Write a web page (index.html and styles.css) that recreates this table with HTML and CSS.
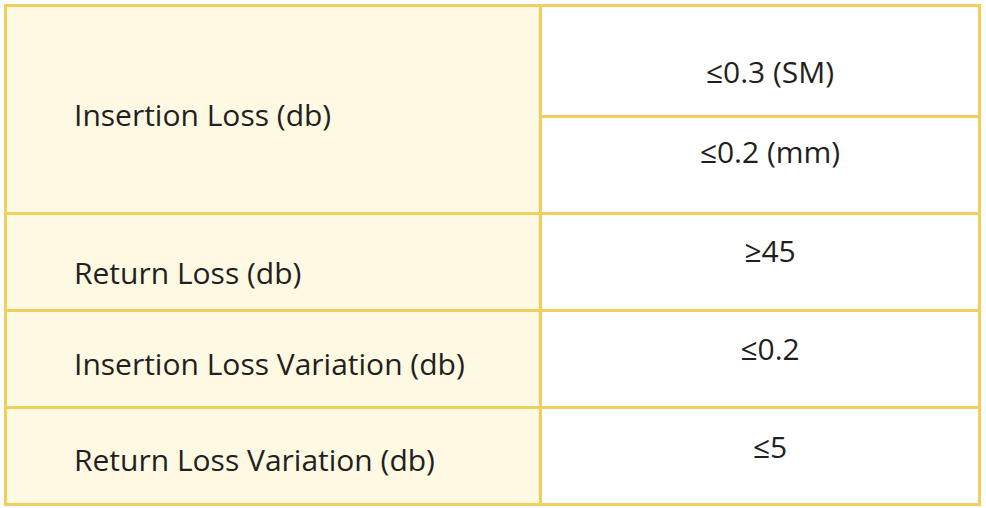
FILE: index.html
```html
<!DOCTYPE html>
<html lang="en">
<head>
<meta charset="utf-8">
<title>Specifications</title>
<link rel="stylesheet" href="styles.css">
</head>
<body>
<div class="spec">
  <div class="label label-1">Insertion Loss (db)</div>
  <div class="value value-1a">≤0.3 (SM)</div>
  <div class="value value-1b">≤0.2 (mm)</div>
  <div class="label label-2">Return Loss (db)</div>
  <div class="value value-2">≥45</div>
  <div class="label label-3">Insertion Loss Variation (db)</div>
  <div class="value value-3">≤0.2</div>
  <div class="label label-4">Return Loss Variation (db)</div>
  <div class="value value-4">≤5</div>
</div>
</body>
</html>
```

FILE: styles.css
```css
html, body {
  margin: 0;
  padding: 0;
  background: #ffffff;
}

body {
  padding: 4px 0 0 4px;
  font-family: "Open Sans", "Noto Sans", sans-serif;
  font-size: 30px;
  line-height: 40px;
  color: #231f20;
}

.spec {
  display: grid;
  grid-template-columns: 532px 436px;
  grid-template-rows: 108px 94px 94px 94px 94px;
  gap: 3px;
  padding: 3px;
  width: 977px;
  box-sizing: border-box;
  background: #f0cf5c;
}

.label {
  background: #fef9e2;
  padding-left: 67px;
}

.value {
  background: #ffffff;
  padding-left: 20px;
  text-align: center;
}

.label-1 { grid-row: 1 / span 2; padding-top: 88px; }
.label-2 { padding-top: 38px; }
.label-3 { padding-top: 32px; }
.label-4 { padding-top: 31px; }

.value-1a { padding-top: 45px; }
.value-1b { padding-top: 14px; }
.value-2 { padding-top: 16px; }
.value-3 { padding-top: 17px; }
.value-4 { padding-top: 18px; }
```
